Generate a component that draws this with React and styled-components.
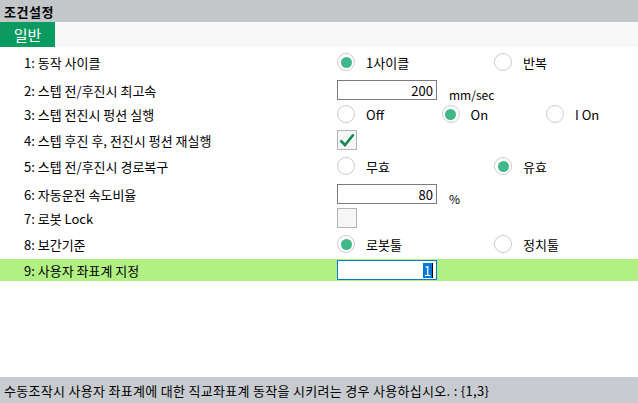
import React from 'react';
import styled, { createGlobalStyle } from 'styled-components';

const GlobalStyle = createGlobalStyle`
  html, body { margin: 0; padding: 0; }
  body {
    background: #fff;
    font-family: "Noto Sans CJK KR", "Noto Sans", sans-serif;
    color: #000;
  }
`;

const Page = styled.div`
  width: 638px;
  height: 403px;
  display: flex;
  flex-direction: column;
  overflow: hidden;
`;

const TitleBar = styled.div`
  height: 22px;
  background: #c3c7ca;
  display: flex;
  align-items: center;
  padding-left: 4px;
  font-size: 13px;
  font-weight: bold;
  letter-spacing: 0.5px;
`;

const TabBar = styled.div`
  height: 25px;
  background: #f8f8f8;
  display: flex;
`;

const Tab = styled.div`
  width: 55px;
  background: #0b9a5f;
  color: #fff;
  font-size: 15px;
  display: flex;
  align-items: center;
  justify-content: center;
  padding-bottom: 1px;
`;

const Body = styled.div`
  flex: 1;
  padding-top: 4px;
  display: flex;
  flex-direction: column;
  gap: 4px;
`;

const Row = styled.div`
  height: 22px;
  display: grid;
  grid-template-columns: 337px 1fr;
  align-items: center;
  background: ${({ active }) => (active ? '#b1f184' : 'transparent')};
`;

const Label = styled.div`
  padding-left: 24px;
  font-size: 13px;
  white-space: nowrap;
`;

const Options = styled.div`
  display: grid;
  grid-template-columns: repeat(${({ count }) => count}, ${({ count }) => (count === 3 ? '104.5px' : '157px')});
  align-items: center;
`;

const Option = styled.div`
  display: flex;
  align-items: center;
  gap: 11px;
  font-size: 13px;
`;

const Circle = styled.span`
  width: 18px;
  height: 18px;
  box-sizing: border-box;
  border-radius: 50%;
  border: 1px solid #cccccc;
  background: #fff;
  display: flex;
  align-items: center;
  justify-content: center;
  &::after {
    content: '';
    width: 11px;
    height: 11px;
    border-radius: 50%;
    background: ${({ on }) => (on ? '#40b98a' : 'transparent')};
  }
`;

const Field = styled.div`
  display: flex;
  align-items: center;
  gap: 12px;
`;

const Input = styled.div`
  width: 100px;
  height: 20px;
  box-sizing: border-box;
  border: 1px solid ${({ focus }) => (focus ? '#0078d7' : '#7a7a7a')};
  background: #fff;
  display: flex;
  align-items: center;
  justify-content: flex-end;
  padding-right: 3px;
  font-size: 13px;
`;

const Selected = styled.span`
  background: #0078d7;
  color: #fff;
  line-height: 15px;
  padding: 0 1px;
`;

const Caret = styled.span`
  width: 1px;
  height: 15px;
  background: #000;
`;

const Unit = styled.span`
  font-size: 12px;
  margin-top: 9px;
`;

const Check = styled.span`
  width: 20px;
  height: 20px;
  box-sizing: border-box;
  border: 1px solid #b4b4b4;
  background: #f6f6f6;
  display: flex;
  align-items: center;
  justify-content: center;
`;

const StatusBar = styled.div`
  height: 26px;
  background: #c8ccd0;
  display: flex;
  align-items: center;
  padding-left: 4px;
  font-size: 13px;
  letter-spacing: 0.3px;
  white-space: nowrap;
`;

const Radio = ({ items, value }) => (
  <Options count={items.length}>
    {items.map((t) => (
      <Option key={t}>
        <Circle on={t === value} />
        {t}
      </Option>
    ))}
  </Options>
);

const CheckBox = ({ checked }) => (
  <Check>
    {checked && (
      <svg width="16" height="14" viewBox="0 0 16 14">
        <path d="M1.5 7.5 L6 12 L14.5 1.5" fill="none" stroke="#138a4c" strokeWidth="2.6" />
      </svg>
    )}
  </Check>
);

const App = () => (
  <Page>
    <GlobalStyle />
    <TitleBar>조건설정</TitleBar>
    <TabBar>
      <Tab>일반</Tab>
    </TabBar>
    <Body>
      <Row>
        <Label>1: 동작 사이클</Label>
        <Radio items={['1사이클', '반복']} value="1사이클" />
      </Row>
      <Row>
        <Label>2: 스텝 전/후진시 최고속</Label>
        <Field>
          <Input>200</Input>
          <Unit>mm/sec</Unit>
        </Field>
      </Row>
      <Row>
        <Label>3: 스텝 전진시 펑션 실행</Label>
        <Radio items={['Off', 'On', 'I On']} value="On" />
      </Row>
      <Row>
        <Label>4: 스텝 후진 후, 전진시 펑션 재실행</Label>
        <CheckBox checked />
      </Row>
      <Row>
        <Label>5: 스텝 전/후진시 경로복구</Label>
        <Radio items={['무효', '유효']} value="유효" />
      </Row>
      <Row>
        <Label>6: 자동운전 속도비율</Label>
        <Field>
          <Input>80</Input>
          <Unit>%</Unit>
        </Field>
      </Row>
      <Row>
        <Label>7: 로봇 Lock</Label>
        <CheckBox />
      </Row>
      <Row>
        <Label>8: 보간기준</Label>
        <Radio items={['로봇툴', '정치툴']} value="로봇툴" />
      </Row>
      <Row active>
        <Label>9: 사용자 좌표계 지정</Label>
        <Field>
          <Input focus>
            <Selected>1</Selected>
            <Caret />
          </Input>
        </Field>
      </Row>
    </Body>
    <StatusBar>수동조작시 사용자 좌표계에 대한 직교좌표계 동작을 시키려는 경우 사용하십시오. : {'{1,3}'}</StatusBar>
  </Page>
);

export default App;
